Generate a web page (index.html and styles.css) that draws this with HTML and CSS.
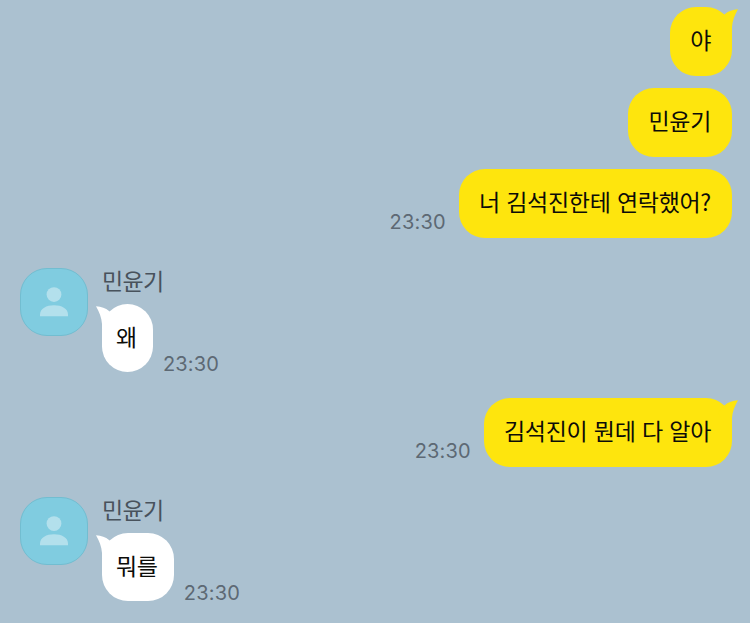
FILE: index.html
```
<!DOCTYPE html>
<html lang="ko">
<head>
<meta charset="UTF-8">
<meta name="viewport" content="width=device-width, initial-scale=1.0">
<title>민윤기</title>
<link rel="stylesheet" href="styles.css">
</head>
<body>

<!-- Shared shapes -->
<svg class="defs" width="0" height="0">
  <symbol id="tail" viewBox="0 0 24 24">
    <path d="M24 1.2 C18.5 1.8 14.5 3 11 6 L4 14 L10 24 L18 24 V19 C18.4 12 20.8 7 24 1.2 Z"/>
  </symbol>
  <symbol id="person" viewBox="0 0 28 30">
    <circle cx="14" cy="7.6" r="7.4"/>
    <path d="M0 29.2 V27.5 C0 21.5 6.5 18.2 14 18.2 S28 21.5 28 27.5 V29.2 Z"/>
  </symbol>
</svg>

<div class="chat">
  <!-- Sent messages -->
  <div class="sent">
    <div class="bubble">야<svg class="tail"><use href="#tail"/></svg></div>
  </div>
  <div class="sent">
    <div class="bubble">민윤기</div>
  </div>
  <div class="sent">
    <span class="time">23:30</span>
    <div class="bubble">너 김석진한테 연락했어?</div>
  </div>

  <!-- Received message -->
  <div class="received">
    <div class="avatar"><svg><use href="#person"/></svg></div>
    <div class="content">
      <div class="name">민윤기</div>
      <div class="line">
        <div class="bubble">왜<svg class="tail"><use href="#tail"/></svg></div>
        <span class="time">23:30</span>
      </div>
    </div>
  </div>

  <div class="sent reply">
    <span class="time">23:30</span>
    <div class="bubble">김석진이 뭔데 다 알아<svg class="tail"><use href="#tail"/></svg></div>
  </div>

  <div class="received">
    <div class="avatar"><svg><use href="#person"/></svg></div>
    <div class="content">
      <div class="name">민윤기</div>
      <div class="line">
        <div class="bubble">뭐를<svg class="tail"><use href="#tail"/></svg></div>
        <span class="time">23:30</span>
      </div>
    </div>
  </div>
</div>

</body>
</html>
```
FILE: styles.css
```
body {
  margin: 0;
  background-color: #abc1d0;
  font-family: "Noto Sans CJK KR", sans-serif;
}

.defs {
  position: absolute;
}

.chat {
  box-sizing: border-box;
  height: 623px;
  padding: 7px 18px 0 20px;
  overflow: hidden;
}

/* Message rows */
.sent {
  display: flex;
  justify-content: flex-end;
  align-items: flex-end;
  gap: 13px;
  margin-bottom: 12px;
}

.received {
  display: flex;
  gap: 14px;
  margin-top: 30px;
}

.reply {
  margin-top: 26px;
}

.line {
  display: flex;
  align-items: flex-end;
  gap: 10px;
}

/* Bubbles */
.bubble {
  position: relative;
  box-sizing: border-box;
  height: 69px;
  padding: 0 21px 0 20px;
  border-radius: 26px;
  background-color: #fee50d;
  color: #0c0c08;
  font-size: 23px;
  line-height: 65px;
  letter-spacing: -0.3px;
  word-spacing: 0.3px;
  white-space: nowrap;
}

.received .bubble {
  height: 68px;
  padding: 0 16px 0 14px;
  border-radius: 26px;
  background-color: #fff;
  line-height: 64px;
}

/* Tail in the top corner of a bubble */
.tail {
  position: absolute;
  top: 1px;
  right: -6px;
  width: 24px;
  height: 24px;
  fill: #fee50d;
}

.received .tail {
  right: auto;
  left: -6px;
  fill: #fff;
  transform: scaleX(-1);
}

/* Sender */
.avatar {
  display: flex;
  justify-content: center;
  align-items: center;
  box-sizing: border-box;
  width: 68px;
  height: 68px;
  border: 1px solid #72bdd0;
  border-radius: 27px;
  background-color: #80cce0;
}

.avatar svg {
  width: 28px;
  height: 30px;
  fill: #b3e0ec;
}

.name {
  height: 36px;
  color: #48525c;
  font-size: 23px;
  line-height: 25px;
  letter-spacing: -0.6px;
}

.time {
  padding-bottom: 4px;
  color: #5d6974;
  font-family: Inter, sans-serif;
  font-size: 20px;
  line-height: 23px;
  letter-spacing: 0.2px;
}

.received .time {
  padding-bottom: 0;
  line-height: 15px;
}
```
